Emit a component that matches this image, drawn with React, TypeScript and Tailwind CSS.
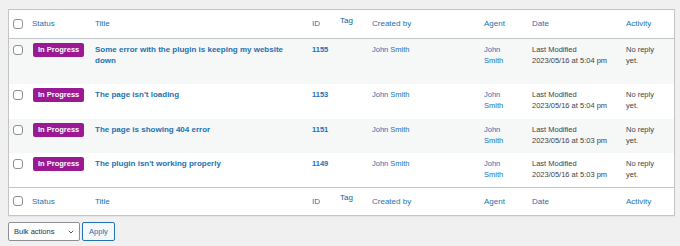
import { ChevronDown } from 'lucide-react';

type Ticket = {
  id: number;
  title: string;
  date: string;
  height: string;
  striped: boolean;
};

const tickets: Ticket[] = [
  { id: 1155, title: 'Some error with the plugin is keeping my website down', date: '2023/05/16 at 5:04 pm', height: 'h-[46px]', striped: true },
  { id: 1153, title: "The page isn't loading", date: '2023/05/16 at 5:04 pm', height: 'h-[35px]', striped: false },
  { id: 1151, title: 'The page is showing 404 error', date: '2023/05/16 at 5:03 pm', height: 'h-[34px]', striped: true },
  { id: 1149, title: "The plugin isn't working properly", date: '2023/05/16 at 5:03 pm', height: 'h-[34px]', striped: false },
];

function Checkbox() {
  return <span className="block w-[10px] h-[10px] rounded-[3px] border border-[#8c8f94] bg-white" />;
}

function HeaderRow({ border }: { border: string }) {
  return (
    <tr className={`h-[28px] ${border} border-[#c3c4c7] text-[8px] text-[#2271b1]`}>
      <td className="pl-[4px] align-middle">
        <Checkbox />
      </td>
      <th className="px-[4px] font-normal text-left align-middle">Status</th>
      <th className="px-[4px] font-normal text-left align-middle">Title</th>
      <th className="px-[4px] font-normal text-left align-middle">ID</th>
      <th className="px-[4px] pb-[7px] font-normal text-left align-middle text-[#135e96]">Tag</th>
      <th className="px-[4px] font-normal text-left align-middle">Created by</th>
      <th className="px-[4px] font-normal text-left align-middle">Agent</th>
      <th className="px-[4px] font-normal text-left align-middle">Date</th>
      <th className="px-[4px] font-normal text-left align-middle">Activity</th>
    </tr>
  );
}

export default function App() {
  return (
    <div className="w-[680px] h-[246px] bg-[#f0f0f1] pt-[9px] px-[8px] font-['Liberation_Sans',Arial,sans-serif] leading-[11px]">
      <div className="w-[667px] border border-[#c3c4c7] bg-white shadow-[0_1px_1px_rgba(0,0,0,0.04)]">
        <table className="w-[665px] table-fixed border-collapse">
          <colgroup>
            <col className="w-[19px]" />
            <col className="w-[63px]" />
            <col className="w-[217px]" />
            <col className="w-[28px]" />
            <col className="w-[32px]" />
            <col className="w-[112px]" />
            <col className="w-[48px]" />
            <col className="w-[94px]" />
            <col className="w-[52px]" />
          </colgroup>
          <thead>
            <HeaderRow border="border-b" />
          </thead>
          <tbody>
            {tickets.map((t) => (
              <tr key={t.id} className={`${t.height} ${t.striped ? 'bg-[#f6f7f7]' : 'bg-white'} align-top text-[7.5px]`}>
                <td className="pl-[4px] pt-[6px]">
                  <Checkbox />
                </td>
                <td className="pl-[5px] pr-[4px] pt-[4px]">
                  <span className="inline-block rounded-[2px] bg-[#9b1a93] px-[5px] py-[2px] leading-[10px] font-bold text-white">
                    In Progress
                  </span>
                </td>
                <td className="px-[4px] pt-[5px] text-[8px] font-bold text-[#2271b1]">{t.title}</td>
                <td className="px-[4px] pt-[5px] font-bold text-[#2271b1]">{t.id}</td>
                <td className="px-[4px] pt-[5px]" />
                <td className="px-[4px] pt-[5px] text-[#2271b1]">John Smith</td>
                <td className="px-[4px] pt-[5px] text-[#2271b1]">
                  John
                  <br />
                  Smith
                </td>
                <td className="px-[4px] pt-[5px] text-[#3c434a]">
                  Last Modified
                  <br />
                  {t.date}
                </td>
                <td className="px-[4px] pt-[5px] text-[#3c434a]">
                  No reply
                  <br />
                  yet.
                </td>
              </tr>
            ))}
          </tbody>
          <tfoot>
            <HeaderRow border="border-t" />
          </tfoot>
        </table>
      </div>
      <div className="mt-[6px] flex items-center gap-[2px]">
        <div className="flex h-[19px] w-[72px] items-center justify-between rounded-[2px] border border-[#8c8f94] bg-white pl-[5px] pr-[4px] text-[7.5px] text-[#2c3338]">
          <span>Bulk actions</span>
          <ChevronDown className="w-[8px] h-[8px] text-[#50575e]" strokeWidth={3} />
        </div>
        <button className="h-[19px] w-[33px] rounded-[2px] border border-[#2271b1] bg-[#f6f7f7] text-[7.5px] text-[#2271b1]">
          Apply
        </button>
      </div>
    </div>
  );
}
